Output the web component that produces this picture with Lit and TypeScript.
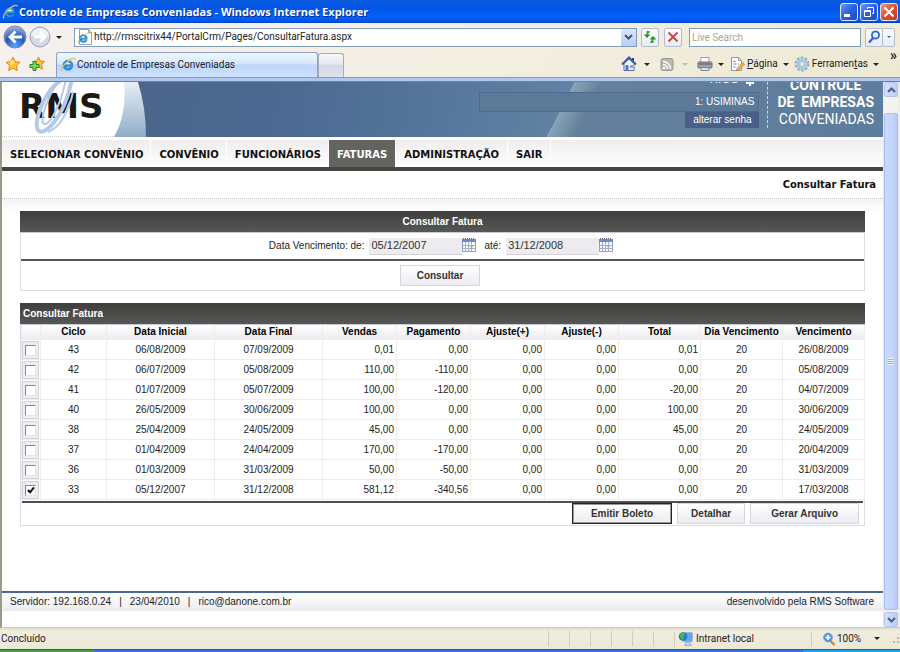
import { LitElement, html, css, svg } from "lit";
import { customElement, state } from "lit/decorators.js";
import { classMap } from "lit/directives/class-map.js";

interface Fatura {
  ciclo: string;
  inicial: string;
  final: string;
  valores: string[];
  dia: string;
  vencimento: string;
  marcado?: boolean;
}

const FATURAS: Fatura[] = [
  { ciclo: "43", inicial: "06/08/2009", final: "07/09/2009", valores: ["0,01", "0,00", "0,00", "0,00", "0,01"], dia: "20", vencimento: "26/08/2009" },
  { ciclo: "42", inicial: "06/07/2009", final: "05/08/2009", valores: ["110,00", "-110,00", "0,00", "0,00", "0,00"], dia: "20", vencimento: "05/08/2009" },
  { ciclo: "41", inicial: "01/07/2009", final: "05/07/2009", valores: ["100,00", "-120,00", "0,00", "0,00", "-20,00"], dia: "20", vencimento: "04/07/2009" },
  { ciclo: "40", inicial: "26/05/2009", final: "30/06/2009", valores: ["100,00", "0,00", "0,00", "0,00", "100,00"], dia: "20", vencimento: "30/06/2009" },
  { ciclo: "38", inicial: "25/04/2009", final: "24/05/2009", valores: ["45,00", "0,00", "0,00", "0,00", "45,00"], dia: "20", vencimento: "24/05/2009" },
  { ciclo: "37", inicial: "01/04/2009", final: "24/04/2009", valores: ["170,00", "-170,00", "0,00", "0,00", "0,00"], dia: "20", vencimento: "20/04/2009" },
  { ciclo: "36", inicial: "01/03/2009", final: "31/03/2009", valores: ["50,00", "-50,00", "0,00", "0,00", "0,00"], dia: "20", vencimento: "31/03/2009" },
  { ciclo: "33", inicial: "05/12/2007", final: "31/12/2008", valores: ["581,12", "-340,56", "0,00", "0,00", "0,00"], dia: "20", vencimento: "17/03/2008", marcado: true },
];

const MENU = ["SELECIONAR CONVÊNIO", "CONVÊNIO", "FUNCIONÁRIOS", "FATURAS", "ADMINISTRAÇÃO", "SAIR"];
const COLUNAS = ["", "Ciclo", "Data Inicial", "Data Final", "Vendas", "Pagamento", "Ajuste(+)", "Ajuste(-)", "Total", "Dia Vencimento", "Vencimento"];

const ieMark = svg`
  <path d="M3.200 9.200h9.600c.2-3.800-1.800-6-4.800-6s-5 2.200-5 5c0 3 2.200 5 5 5 2.200 0 3.900-1.100 4.600-3H9.800c-.4.7-1 1-1.800 1-1.200 0-1.900-.7-2-2z" fill="#2f9be8" stroke="#1467b8" stroke-width=".6"/>
  <path d="M6 7.300c.2-1.200.9-1.900 2-1.900s1.800.7 1.900 1.900z" fill="#fff"/>
  <path d="M2 14.500C.2 12.500 4 7 8.500 3.700 12 1.200 15.500.2 15.300 2.800" fill="none" stroke="#e8c060" stroke-width="1.200"/>`;

const icons = {
  ie: svg`<svg class="i16" viewBox="0 0 16 16" aria-hidden="true">${ieMark}</svg>`,
  page: svg`<svg class="i16" viewBox="0 0 16 16" aria-hidden="true"><path d="M2.500.5h9l3 3v12h-12z" fill="#fff" stroke="#9aa0a9"/><path d="M11.500.5v3h3" fill="none" stroke="#9aa0a9"/><g transform="translate(0 3) scale(.8)">${ieMark}</g></svg>`,
  star: svg`<svg class="i16" viewBox="0 0 16 16" aria-hidden="true"><path d="M8 1.200l2.100 4.500 4.900.6-3.600 3.400 1 4.900L8 12.200l-4.400 2.400 1-4.900L1 6.300l4.900-.6z" fill="#ffc62e" stroke="#d98a10"/><path d="M8 3.500l1.300 3-3.800 3 .3-2.700L4 6.600z" fill="#ffe68a"/></svg>`,
  addStar: svg`<svg class="i16" viewBox="0 0 16 16" aria-hidden="true"><path d="M9.500 1l1.800 4 4.200.6-3 3 .8 4.500L9.500 11l-3.800 2 .8-4.400-3-3L7.700 5z" fill="#ffc62e" stroke="#c98d18"/><path d="M4 5.500h3v3h3v3H7v3H4v-3H1v-3h3z" fill="#7fd45e" stroke="#1f8a1c"/></svg>`,
  home: svg`<svg class="i16" viewBox="0 0 16 16" aria-hidden="true"><path d="M11 2h2v4h-2z" fill="#26408c"/><path d="M3 7.500v7h10v-7L8 3z" fill="#f4f6fb" stroke="#5870a4"/><path d="M1 8.500L8 1.500l7 7" fill="none" stroke="#3a5bb0" stroke-width="2"/><path d="M4.500 9h3v5.500h-3z" fill="#5576b8"/><path d="M9 9h3v3H9z" fill="#7aa5e8"/></svg>`,
  rss: svg`<svg class="i16" viewBox="0 0 16 16" aria-hidden="true"><rect x="2" y="2.500" width="12" height="12" rx="2" fill="#b9b8b2" stroke="#9c9b95"/><circle cx="5" cy="12" r="1.300" fill="#fff"/><path d="M4 8.500a4.500 4.500 0 0 1 4.500 4.500M4 5.500A7.500 7.500 0 0 1 11.500 13" fill="none" stroke="#fff" stroke-width="1.300"/></svg>`,
  printer: svg`<svg class="i16" viewBox="0 0 16 16" aria-hidden="true"><path d="M4 1.500h8v5H4z" fill="#fff" stroke="#9d9d9d"/><rect x="1" y="6" width="14" height="6" rx="1" fill="#a2a2a8" stroke="#6f6f76"/><path d="M2 8h12" stroke="#55555a"/><path d="M4 11.500h8v3H4z" fill="#cfe2fb" stroke="#88888e"/></svg>`,
  pageTool: svg`<svg class="i16" viewBox="0 0 16 16" aria-hidden="true"><path d="M2.500 1.500h7l3 3v10h-10z" fill="#fff" stroke="#8f9ab2"/><path d="M9.500 1.500v3h3" fill="none" stroke="#8f9ab2"/><path d="M4.500 5.500h2M4.500 8h3M9 8h1M4.500 11h2" stroke="#4f77c4"/><path d="M8 12.500l5.500-6 2 1.800-5.500 5.700-2.500.8z" fill="#efb64a" stroke="#a8762a" stroke-width=".7"/></svg>`,
  gear: svg`<svg class="i16" viewBox="0 0 16 16" aria-hidden="true"><circle cx="8" cy="8" r="6.200" fill="none" stroke="#8fabc6" stroke-width="2.400" stroke-dasharray="2.500 1.400"/><circle cx="8" cy="8" r="4.400" fill="#eef3f8" stroke="#a9c6e2" stroke-width="3"/><circle cx="8" cy="8" r="2.400" fill="#f3f0e6" stroke="#7e9fc0" stroke-width=".8"/></svg>`,
  refresh: svg`<svg class="i14" viewBox="0 0 14 14" aria-hidden="true"><path d="M6.500 2H4.500V5" fill="none" stroke="#35a12c" stroke-width="1.800"/><path d="M.8 4.500h6.400L4 8z" fill="#2a8f22"/><path d="M7.500 12h2V9" fill="none" stroke="#35a12c" stroke-width="1.800"/><path d="M6.800 9.500h6.400L10 6z" fill="#2a8f22"/></svg>`,
  stop: svg`<svg class="i14" viewBox="0 0 14 14" aria-hidden="true"><path d="M2.500 2.500l9 9M11.500 2.500l-9 9" stroke="#cf4642" stroke-width="2"/></svg>`,
  lens: svg`<svg class="i14" viewBox="0 0 14 14" aria-hidden="true"><circle cx="8.500" cy="5" r="3.600" fill="#e6f0ff" stroke="#2f66d8" stroke-width="1.800"/><path d="M6 8l-4 4.500" stroke="#2f66d8" stroke-width="2.400"/></svg>`,
  zoom: svg`<svg class="i14" viewBox="0 0 14 14" aria-hidden="true"><path d="M8 8.500l4.500 4.500" stroke="#b98a4a" stroke-width="2.400"/><circle cx="6" cy="5.500" r="4.300" fill="#4f9be8" stroke="#6a92d0"/><path d="M6 3v5M3.500 5.500h5" stroke="#fff" stroke-width="1.600"/></svg>`,
  intranet: svg`<svg class="i16" viewBox="0 0 16 16" aria-hidden="true"><rect x="4.500" y="1.500" width="10" height="9" rx="1" fill="#5ea8f4" stroke="#9fb4d4"/><path d="M8 11h4l1.500 3.500H6.500z" fill="#c4d0e4" stroke="#8796b0" stroke-width=".6"/><circle cx="5" cy="5.500" r="4.300" fill="#2a78d8"/><path d="M1.500 4c1.500-2.500 3.500-3 5.500-2C6.500 5 5.500 5 5 9 3 8 2 6.500 1.500 4z" fill="#49b648"/></svg>`,
  calendar: svg`<svg class="i14" viewBox="0 0 14 14" aria-hidden="true"><path d="M.5 1.500h13v12H.5z" fill="#f6f8ff" stroke="#8f9cc8"/><path d="M0 1h14v3H0z" fill="#7488c0"/><path d="M1 .5h12" stroke="#5a6890" stroke-dasharray="1 1"/><path d="M.5 7.500h13M.5 10.500h13M3.500 4v10M6.500 4v10M9.500 4v10" stroke="#9fb0d8"/><path d="M8 7h3v2H8z" fill="#b8c24a"/></svg>`,
};

@customElement("browser-chrome")
export class BrowserChrome extends LitElement {
  static styles = css`
    :host { display: block; font: 10px/14px "Roboto", "Open Sans", sans-serif; color: #222; }
    button { font: inherit; color: inherit; margin: 0; padding: 0; border: 0; background: none; display: flex; align-items: center; justify-content: center; }
    input { font: inherit; min-width: 0; margin: 0; border: 0; padding: 0; background: none; outline: none; color: #222; }
    svg { display: block; flex: none; }
    .i16 { width: 16px; height: 16px; }
    .i14 { width: 14px; height: 14px; }
    .title { display: flex; align-items: center; height: 23px; box-sizing: border-box; padding: 0 2px 0 2px; gap: 1px; background: linear-gradient(#0a5ce0, #0353e4 30%, #0162fb 75%, #0056e8 92%, #003fc0); }
    .title h1 { flex: 1; margin: 0; color: #fff; font: bold 11px/16px "Open Sans", sans-serif; text-shadow: 1px 1px #0a2a88; white-space: nowrap; }
    .win { display: flex; gap: 2px; }
    .win button { width: 18px; height: 18px; box-sizing: border-box; border: 1px solid #dfe8fb; border-radius: 3px; background: linear-gradient(135deg, #6b98f4, #2b5fe0 50%, #1a4ac6); }
    .win .close { background: linear-gradient(135deg, #f09a80, #e0502c 50%, #c23a12); }
    .nav { display: flex; align-items: center; height: 28px; padding: 0 5px 0 3px; gap: 4px; background: linear-gradient(90deg, #f6f0ee, #f3efe3 50%, #efebd8); }
    .travel { display: flex; align-items: center; margin-right: 8px; }
    .arrow { width: 0; height: 0; border: 3px solid transparent; border-top-color: #222; border-bottom: 0; flex: none; }
    .arrow.dim { border-top-color: #c0bcae; }
    .travel .arrow { margin-left: 4px; }
    .address { flex: 1; display: flex; align-items: center; height: 19px; box-sizing: border-box; border: 1px solid #7f9db9; background: #fff; padding-left: 2px; gap: 1px; }
    .address input { flex: 1; }
    .drop { width: 15px; height: 17px; background: linear-gradient(#dce6fd, #b9cdf9); }
    .tile { width: 18px; height: 19px; box-sizing: border-box; border: 1px solid #b5bccb; border-radius: 2px; background: linear-gradient(#fdfdff, #e8ebf3); margin-right: 1px; }
    .search { width: 172px; height: 19px; box-sizing: border-box; border: 1px solid #7f9db9; background: #fff; padding-left: 2px; margin-left: 2px; }
    .search::placeholder { color: #aaa696; opacity: 1; }
    .split { display: flex; }
    .split .tile { margin: 0; }
    .split .small { width: 13px; margin-left: -1px; }
    .small .arrow { border-top-color: #2a5bd0; border-width: 2px; border-bottom: 0; }
    .tabs { display: flex; align-items: stretch; height: 26px; background: linear-gradient(90deg, #f6f0ee, #f3efe3 50%, #eee9d3); }
    .favs { display: flex; align-items: center; gap: 8px; width: 51px; padding-left: 5px; }
    .tab { display: flex; align-items: center; gap: 1px; width: 262px; box-sizing: border-box; margin-top: 1px; padding-left: 3px; border: 1px solid #8ba0c2; border-bottom: 0; border-radius: 3px 3px 0 0; background: linear-gradient(#f2f8ff, #d4e5fd 45%, #bcd5fb 50%, #cfe2fe); white-space: nowrap; }
    .newtab { width: 26px; margin-top: 2px; box-sizing: border-box; border: 1px solid #a7acba; border-bottom: 0; border-radius: 3px 3px 0 0; background: linear-gradient(#f6f7fb, #e6e8f0 45%, #d4d8e6 50%, #dfe2ec); }
    .tools { flex: 1; display: flex; align-items: center; justify-content: flex-end; padding-right: 3px; }
    .tool { white-space: nowrap; gap: 1px; margin-right: 9px; }
    .tool .arrow { margin-left: 6px; }
    .tool.wide { margin-right: 3px; gap: 2px; }
    .tool.wide .arrow { margin-left: 3px; margin-right: 2px; }
    .more { align-self: flex-start; font-size: 14px; line-height: 8px; margin-left: 6px; font-weight: bold; }
    .line { height: 5px; box-sizing: border-box; border-top: 1px solid #8a98b5; border-bottom: 1px solid #868074; background: #b2c7f0; }
  `;

  render() {
    return html`
      <header class="title">
        ${icons.ie}
        <h1>Controle de Empresas Conveniadas - Windows Internet Explorer</h1>
        <div class="win">
          <button aria-label="Minimizar"><svg class="i14" viewBox="0 0 14 14"><path d="M2 9h6v3H2z" fill="#fff" /></svg></button>
          <button aria-label="Restaurar"><svg class="i14" viewBox="0 0 14 14"><path d="M5.500 4V2.500h6v6H10M2.500 5.500h6v6h-6zM2.500 6.500h6" fill="none" stroke="#fff" /></svg></button>
          <button class="close" aria-label="Fechar"><svg class="i14" viewBox="0 0 14 14"><path d="M2.500 2.500l9 9M11.500 2.500l-9 9" stroke="#fff" stroke-width="2" /></svg></button>
        </div>
      </header>
      <nav class="nav">
        <div class="travel">
          <button aria-label="Voltar"><svg width="25" height="24" viewBox="0 0 25 24"><defs><radialGradient id="b" cx=".5" cy=".9" r=".9"><stop offset="0" stop-color="#5aa8f0" /><stop offset=".5" stop-color="#2558b8" /><stop offset="1" stop-color="#a8b8dc" /></radialGradient></defs><circle cx="12" cy="12" r="11" fill="url(#b)" stroke="#7e8ba8" /><path d="M12.500 6.500L7 12l5.500 5.500M7.500 12H19" fill="none" stroke="#fff" stroke-width="2.800" /></svg></button>
          <button aria-label="Avançar"><svg width="24" height="24" viewBox="0 0 24 24"><circle cx="12" cy="12" r="10" fill="#d3dae6" stroke="#99a3b4" /><path d="M3 11a9 8 0 0 1 18 0z" fill="#eef1f6" /><path d="M12 7l5 5-5 5M16.500 12H6" fill="none" stroke="#fff" stroke-width="2.600" /></svg></button>
          <span class="arrow"></span>
        </div>
        <div class="address">
          ${icons.page}
          <input aria-label="Endereço" value="http://rmscitrix44/PortalCrm/Pages/ConsultarFatura.aspx" />
          <button class="drop" aria-label="Histórico"><svg width="9" height="6" viewBox="0 0 9 6"><path d="M1 1l3.500 3.500L8 1" fill="none" stroke="#3f5785" stroke-width="2" /></svg></button>
        </div>
        <button class="tile" aria-label="Atualizar">${icons.refresh}</button>
        <button class="tile" aria-label="Parar">${icons.stop}</button>
        <input class="search" aria-label="Pesquisar" placeholder="Live Search" />
        <div class="split">
          <button class="tile" aria-label="Buscar">${icons.lens}</button>
          <button class="tile small" aria-label="Opções de busca"><span class="arrow"></span></button>
        </div>
      </nav>
      <div class="tabs">
        <div class="favs">
          <button aria-label="Favoritos">${icons.star}</button>
          <button aria-label="Adicionar a favoritos">${icons.addStar}</button>
        </div>
        <div class="tab">${icons.ie}<span>Controle de Empresas Conveniadas</span></div>
        <button class="newtab" aria-label="Nova guia"></button>
        <div class="tools">
          <button class="tool" aria-label="Início">${icons.home}<span class="arrow"></span></button>
          <button class="tool" aria-label="Feeds">${icons.rss}<span class="arrow dim"></span></button>
          <button class="tool wide" aria-label="Imprimir">${icons.printer}<span class="arrow"></span></button>
          <button class="tool wide">${icons.pageTool}<span><u>P</u>ágina</span><span class="arrow"></span></button>
          <button class="tool wide">${icons.gear}<span>Ferramen<u>t</u>as</span><span class="arrow"></span></button>
          <button class="more" aria-label="Mais">»</button>
        </div>
      </div>
      <div class="line"></div>
    `;
  }
}

@customElement("scroll-bar")
export class ScrollBar extends LitElement {
  static styles = css`
    :host { display: flex; flex-direction: column; width: 17px; box-sizing: border-box; background: #f4f3ee; border-left: 1px solid #e4e8f4; border-right: 2px solid #edece2; }
    button { display: flex; align-items: center; justify-content: center; flex: none; height: 15px; margin: 0; padding: 0; border: 1px solid #b4c6f0; border-radius: 2px; background: linear-gradient(90deg, #d5e0fd, #bccdf8); }
    .track { flex: 1; display: flex; padding: 16px 0 2px; }
    .thumb { flex: 1; display: flex; align-items: center; justify-content: center; border: 1px solid #a8bdf0; border-radius: 2px; background: linear-gradient(90deg, #cbdafe, #c1d3fd 70%, #b4c8f8); }
    .grip { width: 6px; height: 7px; background: repeating-linear-gradient(#eef4fe 0 1px, #8cb0f8 1px 2px); }
  `;
  render() {
    return html`
      <button aria-label="Rolar para cima"><svg width="9" height="6" viewBox="0 0 9 6"><path d="M1 5l3.500-3.500L8 5" fill="none" stroke="#4d6185" stroke-width="2" /></svg></button>
      <div class="track"><div class="thumb"><div class="grip"></div></div></div>
      <button aria-label="Rolar para baixo"><svg width="9" height="6" viewBox="0 0 9 6"><path d="M1 1l3.500 3.500L8 1" fill="none" stroke="#4d6185" stroke-width="2" /></svg></button>
    `;
  }
}

@customElement("portal-banner")
export class PortalBanner extends LitElement {
  static styles = css`
    :host { display: flex; justify-content: space-between; height: 55px; overflow: hidden; color: #fff; font: 10px/16px "Liberation Sans", Arial, sans-serif;
      background: linear-gradient(117deg, transparent 63%, #86a4b8 63%, #64809c 66%, #5d7d9c 100%), linear-gradient(100deg, #4d6488, #4a6890 30%, #56769c 50%, #6484a4 66%); }
    .logo { position: relative; width: 146px; height: 55px; }
    .logo svg { display: block; }
    .mark { position: absolute; left: 17px; top: 7px; color: #1a1814; font: bold 34px/34px "DejaVu Sans", sans-serif; }
    .logo .swirl { position: absolute; left: 26px; top: 0; }
    .right { display: flex; align-items: flex-end; padding-bottom: 9px; padding-right: 9px; }
    .user { display: flex; flex-direction: column; align-items: flex-end; width: 280px; margin-right: 8px; flex: none; }
    .name { display: flex; align-items: center; gap: 6px; padding: 0 4px 5px 0; font-size: 12px; line-height: 16px; }
    .company { align-self: stretch; box-sizing: border-box; height: 20px; padding: 0 4px; border: 1px solid #4d6c90; background: #5a7a98; line-height: 18px; text-align: right; }
    .pwd { width: 74px; height: 16px; color: #fff; background: #486085; text-decoration: none; text-align: center; }
    .product { margin: 0; padding-left: 9px; border-left: 1px dashed #c9d6e2; font: bold 14px/17px "Roboto", sans-serif; text-align: right; white-space: nowrap; }
    .product span { display: block; }
    .product .mid { text-align: center; }
    .product .light { font-weight: normal; }
  `;
  render() {
    return html`
      <div class="logo">
        <svg width="146" height="55" viewBox="0 0 146 55">
          <defs><linearGradient id="c" x1="0" y1="0" x2="0" y2="1"><stop offset="0" stop-color="#e8eef3" /><stop offset="1" stop-color="#8fadc8" /></linearGradient></defs>
          <path d="M0 0h136q8 26 8 55H0z" fill="url(#c)" />
          <path d="M0 0h122q3 32-10 55H0z" fill="#fff" />
          <path d="M0 54.500h112" stroke="#c9c9c9" stroke-dasharray="1 1" />
        </svg>
        <span class="mark">RMS</span>
        <svg class="swirl" width="50" height="55" viewBox="0 0 50 55">
          <g fill="none" stroke="#b4cbe8"><path d="M38-4C20 2 4 38 10 48c5 8 27-12 34-52" stroke-width="4" /><path d="M33-4C24 6 12 34 15 41c4 7 18-16 23-45" stroke-width="2" /><path d="M20 50c11-4 21-20 25-40" stroke-width="2" /></g>
        </svg>
      </div>
      <div class="right">
        <div class="user">
          <div class="name"><span>RICO</span><svg width="10" height="14" viewBox="0 0 10 14" aria-hidden="true"><path d="M5 0v14M1 11h8" stroke="#fff" stroke-width="2" /></svg></div>
          <div class="company">1: USIMINAS</div>
          <a class="pwd" href="#senha">alterar senha</a>
        </div>
        <h2 class="product"><span class="mid">CONTROLE</span><span>DE &nbsp;EMPRESAS</span><span class="light">CONVENIADAS</span></h2>
      </div>
    `;
  }
}

@customElement("app-root")
export class AppRoot extends LitElement {
  @state() private linhas = FATURAS;

  private alternar(indice: number) {
    this.linhas = this.linhas.map((f, i) => (i === indice ? { ...f, marcado: !f.marcado } : f));
  }

  static styles = css`
    :host { display: flex; flex-direction: column; min-height: 100vh; background: #ece9d8; color: #1c1c1c; font: 10px/14px "Liberation Sans", Arial, sans-serif; }
    svg { display: block; flex: none; }
    .i16 { width: 16px; height: 16px; }
    .i14 { width: 14px; height: 14px; }
    .view { flex: 1; display: flex; border-left: 2px solid #9c988a; border-bottom: 1px solid #cfccbe; background: #fff; }
    .page { flex: 1; min-width: 0; display: flex; flex-direction: column; background: #fff; }
    .menu { display: flex; margin-top: 3px; height: 27px; border-bottom: 4px solid #464644; background: linear-gradient(#f0ecee, #fff); font: bold 10px/29px "DejaVu Sans", sans-serif; }
    .menu a { padding: 0 8px; border-right: 1px solid #fff; color: #111; text-decoration: none; white-space: nowrap; }
    .menu a:nth-child(-n + 3) { padding-right: 7px; }
    .menu a.on { background: #626460; color: #fff; }
    .heading { margin: 0; padding: 0 7px; border-bottom: 1px dotted #c4c4c4; text-align: right; font: bold 11px/27px "DejaVu Sans Condensed", sans-serif; color: #111; }
    .body { padding: 12px 18px 0; background: linear-gradient(#f5f1f4, #fff 12px); }
    .panel { border: 1px solid #dddde6; border-top: 0; background: #fff; margin-bottom: 12px; }
    .bar { margin: 0 -1px; padding-left: 3px; font: bold 10px/21px "Liberation Sans", Arial, sans-serif; color: #fff; background: linear-gradient(#3f3e3c, #565856); border-bottom: 1px solid #c6c8d2; }
    .bar.center { text-align: center; padding: 0; }
    .filter { display: flex; align-items: center; justify-content: center; height: 26px; border-bottom: 2px solid #565856; gap: 5px; }
    .date { display: flex; align-items: flex-start; margin-right: 3px; }
    .date input { width: 93px; height: 17px; box-sizing: border-box; margin: 0; padding: 0 0 1px 2px; border: 0; border-bottom: 1px solid #d5d3da; background: #eeebee; font: 11px/14px "Liberation Sans", Arial, sans-serif; color: #333; }
    .icon { margin: 0; padding: 0; border: 0; background: none; }
    .actions { display: flex; justify-content: center; padding: 4px 5px 4px 0; }
    .btn { height: 21px; margin: 0; padding: 0 18px; border: 1px solid #d6d6dc; background: linear-gradient(#fff, #ececf1); font: bold 10px/14px "Liberation Sans", Arial, sans-serif; color: #333; white-space: nowrap; }
    .actions .btn { padding: 0 16px; }
    .grid { width: 100%; table-layout: fixed; border-collapse: collapse; font-size: 10px; line-height: 14px; }
    .grid th { height: 14px; padding: 0; border: 1px solid #f0eeea; border-top: 0; background: linear-gradient(#fff, #ebebf1); color: #000; text-align: center; white-space: nowrap; }
    .grid td { height: 19px; padding: 0; border: 1px solid #f0eee2; text-align: center; }
    .grid td.num { padding-right: 2px; text-align: right; }
    .c0 { width: 19px; } .c1 { width: 66px; } .c2, .c3 { width: 108px; } .c4, .c5, .c6, .c7 { width: 74px; }
    .c8, .c9, .c10 { width: 82px; }
    .tick { display: block; width: 17px; height: 18px; box-sizing: border-box; padding: 3px 0 0 2px; border: 1px solid #d3d2dc; background: #efedf1; }
    .tick input { appearance: none; position: relative; display: block; margin: 0; width: 11px; height: 11px; box-sizing: border-box; border: 1px solid #e6e4dc; border-top-color: #8c887a; border-left-color: #8c887a; background: #fff; }
    .tick input:checked::after { content: ""; position: absolute; left: 3px; top: 0; width: 2px; height: 5px; border: solid #111; border-width: 0 2px 2px 0; transform: rotate(40deg); }
    .foot { display: flex; justify-content: flex-end; gap: 5px; margin: 1px 1px 0 1px; padding: 0 4px 1px 0; border-top: 2px solid #4e504e; }
    .foot .btn.first { border-color: #222; box-shadow: inset 0 0 0 1px #999; }
    .foot .btn.mid { padding: 0 13px; }
    .foot .btn.last { padding: 0 20px; }
    .credits { display: flex; justify-content: space-between; margin-top: auto; margin-bottom: 16px; padding: 0 9px 0 8px; border-top: 2px solid #4a6692; background: linear-gradient(#fff, #ebebf1); line-height: 18px; }
    .credits ul { display: flex; margin: 0; padding: 0; list-style: none; }
    .credits li + li::before { content: "|"; margin: 0 8px; }
    .status { display: flex; align-items: center; height: 21px; background: linear-gradient(#dedbcd, #f0eddf 3px, #ece8d6); font: 10px/14px "Roboto", "Open Sans", sans-serif; color: #222; }
    .status .msg { flex: 1; padding-left: 1px; }
    .cell { width: 20px; height: 15px; border-left: 1px solid #cfccbc; }
    .zone { display: flex; align-items: center; gap: 2px; width: 133px; padding-left: 3px; border-left: 1px solid #cfccbc; }
    .zoom { display: flex; align-items: center; gap: 1px; width: 78px; box-sizing: border-box; padding-left: 10px; border-left: 1px solid #cfccbc; }
    .arrow { border: 3px solid transparent; border-top-color: #222; border-bottom: 0; margin-left: 12px; }
    .dots { width: 11px; height: 11px; background: radial-gradient(circle at 1px 1px, #b8b49f 1px, transparent 1px) 0 0 / 4px 4px; clip-path: polygon(100% 0, 100% 100%, 0 100%); }
    .taskbar { display: flex; height: 3px; background: #2f74e0; border-top: 1px solid #2458b8; box-sizing: border-box; justify-content: space-between; }
    .start { width: 94px; background: #46a040; }
    .tray { width: 97px; background: #1ba4ee; }
  `;

  render() {
    return html`
      <browser-chrome></browser-chrome>
      <main class="view">
        <div class="page">
          <portal-banner></portal-banner>
          <nav class="menu">
            ${MENU.map((m) => html`<a href="#" class=${classMap({ on: m === "FATURAS" })}>${m}</a>`)}
          </nav>
          <h2 class="heading">Consultar Fatura</h2>
          <div class="body">
            <form class="panel" @submit=${(e: Event) => e.preventDefault()}>
              <div class="bar center">Consultar Fatura</div>
              <div class="filter">
                <label for="de">Data Vencimento: de:</label>
                <div class="date"><input id="de" value="05/12/2007" /><button type="button" class="icon" aria-label="Escolher data inicial">${icons.calendar}</button></div>
                <label for="ate">até:</label>
                <div class="date"><input id="ate" value="31/12/2008" /><button type="button" class="icon" aria-label="Escolher data final">${icons.calendar}</button></div>
              </div>
              <div class="actions"><button class="btn">Consultar</button></div>
            </form>
            <section class="panel">
              <div class="bar">Consultar Fatura</div>
              <table class="grid">
                <colgroup>${COLUNAS.map((_, i) => html`<col class="c${i}" />`)}</colgroup>
                <thead><tr>${COLUNAS.map((c) => html`<th scope="col">${c}</th>`)}</tr></thead>
                <tbody>
                  ${this.linhas.map((f, i) => html`
                    <tr>
                      <td><label class="tick"><input type="checkbox" aria-label="Selecionar ciclo ${f.ciclo}" .checked=${!!f.marcado} @change=${() => this.alternar(i)} /></label></td>
                      <td>${f.ciclo}</td>
                      <td>${f.inicial}</td>
                      <td>${f.final}</td>
                      ${f.valores.map((v) => html`<td class="num">${v}</td>`)}
                      <td>${f.dia}</td>
                      <td>${f.vencimento}</td>
                    </tr>`)}
                </tbody>
              </table>
              <div class="foot">
                <button class="btn first">Emitir Boleto</button>
                <button class="btn mid">Detalhar</button>
                <button class="btn last">Gerar Arquivo</button>
              </div>
            </section>
          </div>
          <footer class="credits">
            <ul><li>Servidor: 192.168.0.24</li><li>23/04/2010</li><li>rico@danone.com.br</li></ul>
            <span>desenvolvido pela RMS Software</span>
          </footer>
        </div>
        <scroll-bar></scroll-bar>
      </main>
      <footer class="status">
        <span class="msg">Concluído</span>
        <span class="cell"></span><span class="cell"></span><span class="cell"></span><span class="cell"></span><span class="cell"></span><span class="cell"></span>
        <span class="zone">${icons.intranet}Intranet local</span>
        <span class="zoom">${icons.zoom}100%<span class="arrow"></span></span>
        <span class="dots"></span>
      </footer>
      <div class="taskbar"><span class="start"></span><span class="tray"></span></div>
    `;
  }
}
